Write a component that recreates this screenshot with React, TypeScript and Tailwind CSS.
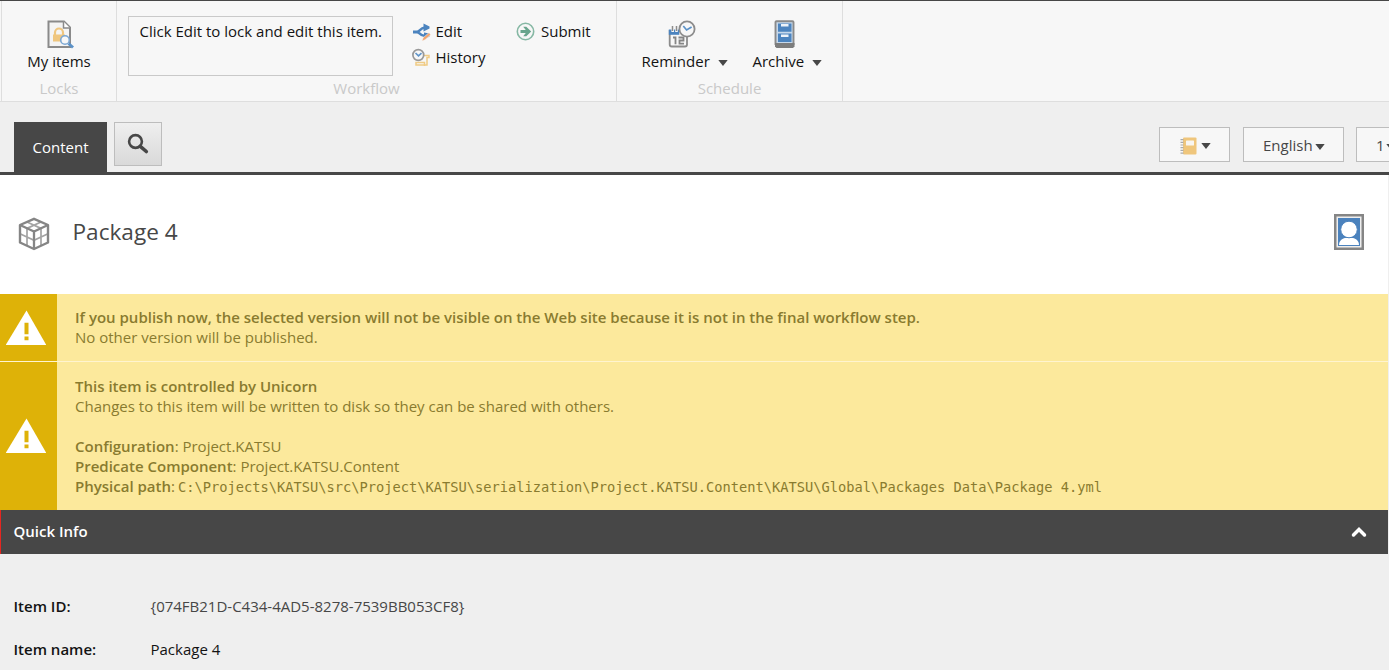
import React from "react";

const Caret = ({ className = "" }: { className?: string }) => (
  <svg width="10" height="6" viewBox="0 0 10 6" className={"block shrink-0 " + className}>
    <path d="M0.3 0h9.4L5 6z" fill="#474747" />
  </svg>
);

const LockedItemsIcon = () => (
  <svg width="28" height="30" viewBox="0 0 28 30" className="block">
    <path d="M1.500 1.500H17l6 6V27h-21.500z" fill="#f4f4f4" stroke="#8a8a8a" strokeWidth="2" />
    <path d="M16.500 1.500v6.500h6.500" fill="#fff" stroke="#8a8a8a" strokeWidth="1.500" />
    <path d="M8 15v-2.500a4 4 0 0 1 8 0V15" fill="none" stroke="#efc67f" strokeWidth="2.200" />
    <path d="M6 14.500h12v7H6z" fill="#efc67f" />
    <path d="M21.500 23.500l4.500 4" stroke="#5c92c8" strokeWidth="3" />
    <circle cx="18" cy="20" r="4.300" fill="#f7f7f7" stroke="#7ba7d3" strokeWidth="1.600" />
  </svg>
);

const EditIcon = () => (
  <svg width="19" height="19" viewBox="0 0 19 19" className="block shrink-0">
    <path d="M1 10h5" stroke="#4c84bf" strokeWidth="3" />
    <path d="M13 5.500C9.500 5.500 8.500 7.500 6 10C8.500 12.500 9.500 14 13 14" fill="none" stroke="#4c84bf" strokeWidth="2.500" />
    <path d="M11.500 1.500L17.500 4.500v2l-6 3zM12 10.500l5.500 1v3l-5.500 3z" fill="#4c84bf" />
    <path d="M10 19l1.200-3.300 5.800-5 1.700 2-5.700 5z" fill="#f2a56f" stroke="#f7f7f7" strokeWidth=".5" />
  </svg>
);

const HistoryIcon = () => (
  <svg width="19" height="19" viewBox="0 0 19 19" className="block shrink-0">
    <path d="M11 7.500h6v2h-2V17H4v-2.500h8.500V18" fill="none" stroke="#f0cb85" strokeWidth="1.500" />
    <circle cx="6.300" cy="7" r="5.400" fill="#f7f7f7" stroke="#999" strokeWidth="1.700" />
    <path d="M3.500 5l3 2.800 3-2.600" fill="none" stroke="#5f94c9" strokeWidth="1.600" />
  </svg>
);

const SubmitIcon = () => (
  <svg width="19" height="19" viewBox="0 0 19 19" className="block shrink-0">
    <circle cx="9.500" cy="9.500" r="8.200" fill="#f7f7f7" stroke="#86b8a4" strokeWidth="1.600" />
    <path d="M4.500 8h5.300L7.200 4.800h3.100l4.900 4.700-4.900 4.700H7.200L9.800 11H4.500z" fill="#69a58d" />
  </svg>
);

const ReminderIcon = () => (
  <svg width="28" height="29" viewBox="0 0 28 29" className="block">
    <path d="M1.700 10v14.500a2 2 0 0 0 2 2H17a2 2 0 0 0 2-2V16" fill="#f7f7f7" stroke="#8c8c8c" strokeWidth="1.800" />
    <path d="M.8 9.500h10.500v5.300H.8z" fill="#4c84bf" />
    <path d="M4.700 6v6M8.500 6v6" stroke="#f7f7f7" strokeWidth="2.600" />
    <path d="M4.500 6v5M8.500 6v5" stroke="#8c8c8c" strokeWidth="1.500" />
    <path d="M5 17.500h2.500v6.800M10.500 17.500h5v3h-4v3.200h4.500" fill="none" stroke="#858585" strokeWidth="1.800" />
    <circle cx="19" cy="9" r="7.600" fill="#f7f7f7" stroke="#8c8c8c" strokeWidth="1.800" />
    <path d="M15.300 6l3.300 4 5-3" fill="none" stroke="#5b92c8" strokeWidth="1.700" />
  </svg>
);

const ArchiveIcon = () => (
  <svg width="22" height="29" viewBox="0 0 22 29" className="block">
    <path d="M2.500 1.200h16a1 1 0 0 1 1 1V24h-18V2.200a1 1 0 0 1 1-1z" fill="#c6d8ea" stroke="#8a8a8a" strokeWidth="1.900" />
    <path d="M1 23h19.500v3.500L19 28H2.500L1 26.500z" fill="#7d7d7d" />
    <path d="M4 3.500h13.500v8.300H4zM4 13.500h13.500V22H4z" fill="#4c84bf" />
    <path d="M7 4h7.500v2.500H7zM7 14.500h7.500V17H7z" fill="#edf3f9" />
  </svg>
);

const CubeIcon = () => (
  <svg width="32" height="34" viewBox="0 0 32 34" className="block" fill="none" stroke="#858585">
    <path d="M9 4.900l14 6.500V28.500M23 4.900L9 11.400V28.500M2 16.800l14 6.500 14-6.500" stroke="#a3a3a3" strokeWidth="1.700" />
    <path d="M16 1.800L30 8v17.500L16 32 2 25.500V8z" strokeWidth="2.400" strokeLinejoin="round" />
    <path d="M2 8l14 6.500L30 8M16 14.500V32" strokeWidth="2.300" />
  </svg>
);

const NotebookIcon = () => (
  <svg width="17" height="18" viewBox="0 0 17 18" className="block shrink-0">
    <rect x="3" y=".5" width="13.500" height="17" rx="1" fill="#efc67c" />
    <path d="M2 2v15" stroke="#aaa" strokeWidth="3" strokeDasharray="1.200 1.500" />
    <rect x="6" y="3.500" width="8" height="5" rx=".6" fill="#f8f5f0" />
  </svg>
);

const UserIcon = () => (
  <svg width="30" height="36" viewBox="0 0 30 36" className="block">
    <path d="M1 1h28v34H1z" fill="#eee" stroke="#858585" strokeWidth="3" />
    <path d="M4 4h22v28H4z" fill="#4b82bd" />
    <path d="M5 31c0-4.500 3.500-6.500 6-7h8c2.500.5 6 2.500 6 7z" fill="#fff" />
    <circle cx="15" cy="15.500" r="8.300" fill="#fff" stroke="#4b82bd" strokeWidth="1" />
  </svg>
);

const WarningIcon = () => (
  <svg width="40" height="36" viewBox="0 0 40 36" className="block">
    <path d="M20.500 .5L40 34.500v.5H0v-.5z" fill="#fff" />
    <path d="M18.500 12.800h4v11.400h-4zM18.500 26.500h4v3.800h-4z" fill="#deb208" />
  </svg>
);

const SearchIcon = () => (
  <svg width="22" height="22" viewBox="0 0 22 22" className="block" fill="none" stroke="#474747">
    <circle cx="8.500" cy="8.500" r="6.400" strokeWidth="2.600" />
    <path d="M13.300 13.300l6 5.200" strokeWidth="3.600" strokeLinecap="round" />
  </svg>
);

const Caption = ({ children }: { children: React.ReactNode }) => (
  <div className="h-5 text-center leading-5 text-[#c9c9c9]">{children}</div>
);

export default function App() {
  return (
    <div className="h-[670px] w-[1389px] overflow-hidden bg-[#efefef] font-['Open_Sans',sans-serif] text-[15px] leading-5 text-[#131313]">
      <div className="flex h-[102px] border-t border-b border-t-[#474747] border-b-[#dedede] bg-[#f7f7f7] pl-px whitespace-nowrap">
        <section className="w-[116px] border-x border-[#dedede]">
          <div className="flex h-[50px] justify-center pt-[19px] pl-[3px]"><LockedItemsIcon /></div>
          <div className="h-[27px] text-center">My items</div>
          <Caption>Locks</Caption>
        </section>
        <section className="w-[500px] border-r border-[#dedede]">
          <div className="flex h-[77px] pt-[15px] pl-[11px]">
            <div className="h-[60px] w-[265px] border border-[#c9c9c9] pt-[4px] pl-[10.500px]">Click Edit to lock and edit this item.</div>
            <div className="ml-[19px] w-[104px] pt-1.5">
              <div className="mb-[7px] flex h-[19px] items-center gap-[4.500px]"><EditIcon /><span className="-mt-px">Edit</span></div>
              <div className="flex h-[19px] items-center gap-[4.500px]"><HistoryIcon /><span className="-mt-px">History</span></div>
            </div>
            <div className="flex h-[31px] items-end gap-[6px]">
              <div className="mb-1.5"><SubmitIcon /></div>
              <div className="mb-[6px]">Submit</div>
            </div>
          </div>
          <Caption>Workflow</Caption>
        </section>
        <section className="w-[226px] border-r border-[#dedede]">
          <div className="flex h-[77px] pt-[19px] pl-[24.500px]">
            <div className="w-[111px]">
              <div className="ml-[26.500px] h-[31px]"><ReminderIcon /></div>
              <div className="flex items-center">Reminder<Caret className="mt-1 ml-[8.500px]" /></div>
            </div>
            <div>
              <div className="ml-[21.500px] h-[31px]"><ArchiveIcon /></div>
              <div className="flex items-center">Archive<Caret className="mt-1 ml-[8px]" /></div>
            </div>
          </div>
          <Caption>Schedule</Caption>
        </section>
      </div>

      <div className="flex h-[73px] border-b-[3px] border-[#474747] pt-5 pl-3.5">
        <div className="h-[50px] w-[93px] shrink-0 bg-[#474747] pt-[15px] text-center text-white">Content</div>
        <button className="ml-[7px] flex h-11 w-12 shrink-0 items-center justify-center border border-[#bdbdbd] bg-linear-to-b from-[#efefef] to-[#d9d9d9]"><SearchIcon /></button>
        <div className="mt-[5px] ml-[997px] flex shrink-0 gap-[13px] text-[#474747]">
          <div className="flex h-[35px] w-[71px] shrink-0 items-center border border-[#bdbdbd] bg-[#f7f7f7] pt-[3px] pl-5"><NotebookIcon /><Caret className="-mt-px ml-1" /></div>
          <div className="flex h-[35px] w-[101px] shrink-0 items-center border border-[#bdbdbd] bg-[#f7f7f7] pl-[19px]">English<Caret className="mt-1 ml-[2px]" /></div>
          <div className="-ml-px flex h-[35px] w-[71px] shrink-0 items-center border border-[#bdbdbd] bg-[#f7f7f7] pl-[19px]">1<Caret className="mt-1 ml-px" /></div>
        </div>
      </div>

      <main className="w-[1388px]">
        <header className="flex h-[119px] items-center bg-white pr-6 pl-[18px]">
          <div className="mt-[-2px]"><CubeIcon /></div>
          <h1 className="mt-[-6px] ml-[22.500px] text-[22.600px] leading-8 text-[#474747]">Package 4</h1>
          <div className="mt-[-5px] ml-auto"><UserIcon /></div>
        </header>

        <div className="flex h-[68px] border-b border-[#fff4cf] bg-[#fce99c] text-[#897b2f]">
          <div className="w-[57px] shrink-0 bg-[#deb208] pt-4 pl-1.5"><WarningIcon /></div>
          <div className="pt-[13px] pl-[18px]">
            <div className="font-semibold">If you publish now, the selected version will not be visible on the Web site because it is not in the final workflow step.</div>
            <div>No other version will be published.</div>
          </div>
        </div>
        <div className="flex h-[148px] bg-[#fce99c] text-[#897b2f]">
          <div className="w-[57px] shrink-0 bg-[#deb208] pt-14 pl-1.5"><WarningIcon /></div>
          <div className="pt-[14px] pl-[18px] whitespace-nowrap">
            <div className="font-semibold">This item is controlled by Unicorn</div>
            <div>Changes to this item will be written to disk so they can be shared with others.</div>
            <div className="mt-5"><b className="font-semibold">Configuration</b>: Project.KATSU</div>
            <div><b className="font-semibold">Predicate Component</b>: Project.KATSU.Content</div>
            <div className="flex h-5"><span className="w-[103px] shrink-0"><b className="font-semibold">Physical path</b>:</span><code className="font-['DejaVu_Sans_Mono',monospace] text-[13.700px] leading-[23px] tracking-[0.01px]">{"C:\\Projects\\KATSU\\src\\Project\\KATSU\\serialization\\Project.KATSU.Content\\KATSU\\Global\\Packages Data\\Package 4.yml"}</code></div>
          </div>
        </div>

        <div className="flex h-11 items-center border-l border-[#e52620] bg-[#474747] pr-[21px] pl-[12.500px] text-white">
          <span className="-mt-0.5 font-semibold">Quick Info</span>
          <svg width="16" height="12" viewBox="0 0 16 12" className="ml-auto block">
            <path d="M2.500 9L8 3.500 13.500 9" fill="none" stroke="#fff" strokeWidth="3.500" strokeLinecap="round" />
          </svg>
        </div>
        <dl className="grid grid-cols-[137px_1fr] gap-y-[23px] pt-[42px] pl-[13.500px]">
          <dt className="font-semibold">Item ID:</dt>
          <dd className="text-[#474747]">{"{074FB21D-C434-4AD5-8278-7539BB053CF8}"}</dd>
          <dt className="font-semibold">Item name:</dt>
          <dd>Package 4</dd>
        </dl>
      </main>
    </div>
  );
}
